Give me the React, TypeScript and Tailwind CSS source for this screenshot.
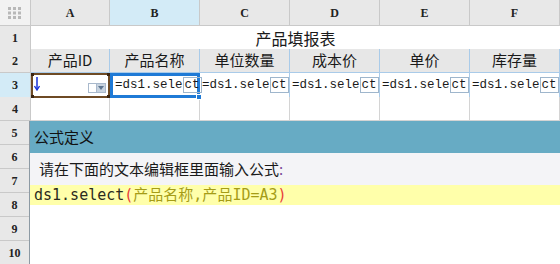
import React from "react";

const cols = "grid grid-cols-[31px_79px_90px_90px_90px_90px_90px]";
const hdrFont = { fontFamily: '"Liberation Serif", "DejaVu Serif", serif' };
const cjk = { fontFamily: '"Noto Sans CJK SC", "Noto Sans", sans-serif' };
const mono = { fontFamily: '"Liberation Mono", "DejaVu Sans Mono", monospace' };
const code = { fontFamily: '"DejaVu Sans Mono", "Liberation Mono", "Noto Sans CJK SC", monospace' };

function RowHead({ n, active }: { n: string; active?: boolean }) {
  return (
    <div
      className={`flex items-center justify-center border-r border-b border-[#c9c9c9] text-[12px] font-bold text-[#222] ${active ? "bg-[#d3ebf7]" : "bg-[#e8e8e8]"}`}
      style={hdrFont}
    >
      {n}
    </div>
  );
}

function Formula() {
  return (
    <div className="flex items-center h-full pl-[2px] text-[12.5px] text-[#1a1a1a]" style={mono}>
      <span>=ds1.sele</span>
      <span className="border border-[#9fb6cc] px-[1px] leading-[14px]">ct</span>
    </div>
  );
}

export default function App() {
  return (
    <div className="w-[560px] h-[264px] overflow-hidden bg-white flex flex-col">
      {/* column header */}
      <div className={`${cols} h-[26px]`}>
        <div className="flex items-center justify-center bg-[#f2f2f2] border-r border-b border-[#c9c9c9]">
          <svg width="14" height="12" viewBox="0 0 14 12">
            {[0, 1, 2].map((r) =>
              [0, 1, 2].map((c) => (
                <rect key={`${r}${c}`} x={c * 5} y={r * 4.5} width="3" height="3" fill="#b8b8b8" />
              ))
            )}
          </svg>
        </div>
        {["A", "B", "C", "D", "E", "F"].map((c) => (
          <div
            key={c}
            className={`flex items-center justify-center border-r border-b border-[#c9c9c9] text-[12px] font-bold text-[#222] ${c === "B" ? "bg-[#d3ebf7]" : "bg-[#e8e8e8]"}`}
            style={hdrFont}
          >
            {c}
          </div>
        ))}
      </div>

      {/* row 1 */}
      <div className={`${cols} h-[23px]`}>
        <RowHead n="1" />
        <div className="col-span-6 flex items-center justify-center border-b border-[#b7d1e8] text-[16px] text-[#1a1a1a]" style={cjk}>
          产品填报表
        </div>
      </div>

      {/* row 2 */}
      <div className={`${cols} h-[24px]`}>
        <RowHead n="2" />
        {["产品ID", "产品名称", "单位数量", "成本价", "单价", "库存量"].map((t) => (
          <div
            key={t}
            className="flex items-center justify-center bg-[#e7e7e7] border-r border-b border-[#a9cbe9] text-[15px] text-[#1a1a1a]"
            style={cjk}
          >
            {t}
          </div>
        ))}
      </div>

      {/* row 3 */}
      <div className={`${cols} h-[24px]`}>
        <RowHead n="3" active />
        <div className="relative border-2 border-[#6e4a24] bg-white flex items-center">
          <span className="absolute -left-[2px] -top-[2px] w-[3px] h-[3px] bg-[#3a2410]" />
          <span className="absolute -right-[2px] -top-[2px] w-[3px] h-[3px] bg-[#3a2410]" />
          <span className="absolute -left-[2px] -bottom-[2px] w-[3px] h-[3px] bg-[#3a2410]" />
          <span className="absolute -right-[2px] -bottom-[2px] w-[3px] h-[3px] bg-[#3a2410]" />
          <svg width="6" height="14" viewBox="0 0 6 14" className="ml-[1px] -mt-[2px]">
            <path d="M3 0 V12" stroke="#1730d8" strokeWidth="1.5" />
            <path d="M0.5 9 L3 13 L5.5 9" stroke="#1730d8" strokeWidth="1.3" fill="none" />
          </svg>
          <div className="ml-auto mr-[2px] mt-[5px] flex">
            <div className="w-[9px] h-[10px] border border-[#a9b9cc] bg-white" />
            <div className="w-[9px] h-[10px] bg-[#c8d3df] border border-[#a9b9cc] border-l-0 flex items-center justify-center">
              <svg width="6" height="4" viewBox="0 0 6 4">
                <path d="M0 0 H6 L3 4 Z" fill="#5d7590" />
              </svg>
            </div>
          </div>
        </div>
        <div className="relative border-[3px] border-[#1f7ad6] bg-white">
          <Formula />
          <span className="absolute -right-[5px] -bottom-[5px] w-[6px] h-[6px] bg-[#1f7ad6] border border-white" />
        </div>
        {[0, 1, 2, 3].map((i) => (
          <div key={i} className="border-r border-b border-[#a9cbe9] bg-white">
            <Formula />
          </div>
        ))}
      </div>

      {/* row 4 */}
      <div className={`${cols} h-[24px]`}>
        <RowHead n="4" />
        {[0, 1, 2, 3, 4, 5].map((i) => (
          <div key={i} className="border-r border-b border-[#d4d4d4] bg-white" />
        ))}
      </div>

      {/* rows 5-10 with panel */}
      <div className="flex flex-1 min-h-0">
        <div className="w-[29px] flex flex-col">
          {["5", "6", "7", "8", "9", "10"].map((n) => (
            <div
              key={n}
              className="h-[24px] shrink-0 flex items-center justify-center bg-[#e8e8e8] border-b border-[#c9c9c9] text-[12px] font-bold text-[#222]"
              style={hdrFont}
            >
              {n}
            </div>
          ))}
        </div>
        <div className="flex-1 flex flex-col border-l border-[#8d9aa4] bg-white">
          <div className="h-[32px] shrink-0 bg-[#67abc4] flex items-center pl-[4px] text-[15px] text-[#111]" style={cjk}>
            公式定义
          </div>
          <div className="h-[32px] shrink-0 bg-[#f4f4f7] flex items-center pl-[9px] text-[15px] text-[#1a1a1a]" style={cjk}>
            请在下面的文本编辑框里面输入公式<span className="text-[#7a4a9a]">:</span>
          </div>
          <div className="h-[20px] shrink-0 bg-[#ffffaa] flex items-center pl-[4px] text-[15px] whitespace-pre" style={code}>
            <span className="text-[#2b2b20]">ds1.select</span>
            <span className="text-[#e8413a]">(</span>
            <span className="text-[#a59c16]">产品名称,产品ID=A3</span>
            <span className="text-[#e8413a]">)</span>
          </div>
        </div>
      </div>
    </div>
  );
}
